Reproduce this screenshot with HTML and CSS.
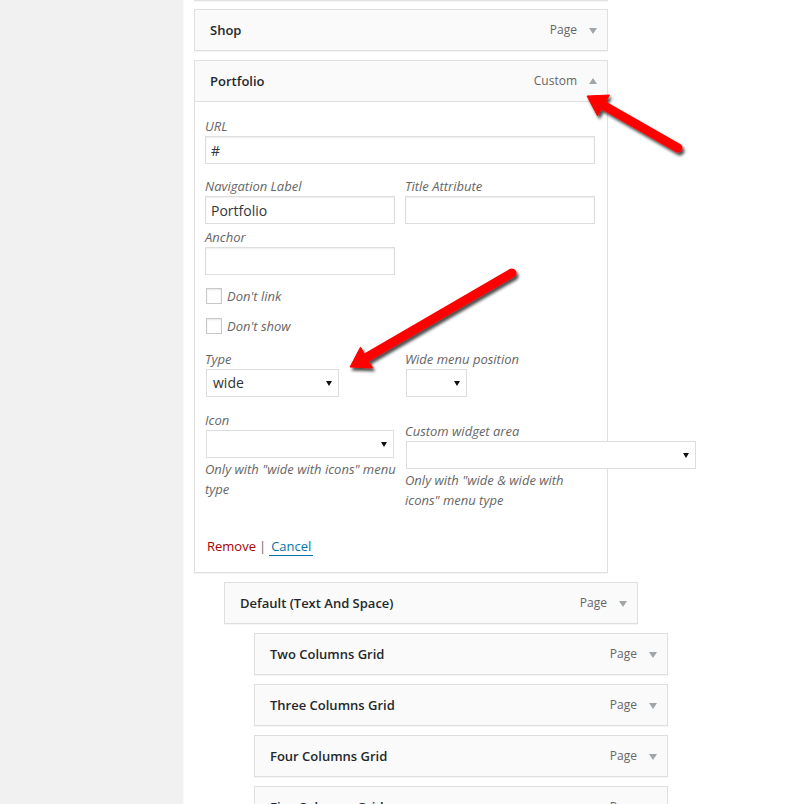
FILE: index.html
```html
<!DOCTYPE html>
<html lang="en">
<head>
<meta charset="utf-8">
<title>Menu editor</title>
<link rel="stylesheet" href="styles.css">
</head>
<body>
<div class="page">
  <aside class="sidebar"></aside>
  <main class="content">
    <ul class="menu">
      <li class="item item-tail"></li>
      <li class="item">
        <div class="handle"><span class="title">Shop</span><span class="type">Page</span><span class="toggle down"></span></div>
      </li>
      <li class="item open">
        <div class="handle"><span class="title">Portfolio</span><span class="type">Custom</span><span class="toggle up"></span></div>
        <div class="settings">
          <div class="field">
            <label class="lbl">URL</label>
            <input class="text wide" type="text" value="#">
          </div>
          <div class="cols row-nav">
            <div class="col">
              <label class="lbl">Navigation Label</label>
              <input class="text" type="text" value="Portfolio">
            </div>
            <div class="col">
              <label class="lbl">Title Attribute</label>
              <input class="text" type="text" value="">
            </div>
          </div>
          <div class="cols row-anchor">
            <div class="col">
              <label class="lbl">Anchor</label>
              <input class="text" type="text" value="">
            </div>
          </div>
          <label class="check first"><input type="checkbox"><span class="lbl-inline">Don't link</span></label>
          <label class="check second"><input type="checkbox"><span class="lbl-inline">Don't show</span></label>
          <div class="cols row-type">
            <div class="col">
              <span class="lbl">Type</span>
              <div class="select w-type"><span class="sel-text">wide</span><span class="sel-arrow"></span></div>
            </div>
            <div class="col">
              <span class="lbl">Wide menu position</span>
              <div class="select w-pos"><span class="sel-text"></span><span class="sel-arrow"></span></div>
            </div>
          </div>
          <div class="cols row-icon">
            <div class="col">
              <span class="lbl">Icon</span>
              <div class="select w-icon"><span class="sel-text"></span><span class="sel-arrow"></span></div>
              <p class="help help-left">Only with "wide with icons" menu type</p>
            </div>
            <div class="col col-offset">
              <span class="lbl">Custom widget area</span>
              <div class="select w-widget"><span class="sel-text"></span><span class="sel-arrow"></span></div>
              <p class="help">Only with "wide &amp; wide with icons" menu type</p>
            </div>
          </div>
          <div class="actions">
            <a class="remove" href="#">Remove</a><span class="sep">|</span><a class="cancel" href="#">Cancel</a>
          </div>
        </div>
      </li>
      <li class="item depth-1">
        <div class="handle"><span class="title">Default (Text And Space)</span><span class="type">Page</span><span class="toggle down"></span></div>
      </li>
      <li class="item depth-2">
        <div class="handle"><span class="title">Two Columns Grid</span><span class="type">Page</span><span class="toggle down"></span></div>
      </li>
      <li class="item depth-2">
        <div class="handle"><span class="title">Three Columns Grid</span><span class="type">Page</span><span class="toggle down"></span></div>
      </li>
      <li class="item depth-2">
        <div class="handle"><span class="title">Four Columns Grid</span><span class="type">Page</span><span class="toggle down"></span></div>
      </li>
      <li class="item depth-2">
        <div class="handle"><span class="title">Five Columns Grid</span><span class="type">Page</span><span class="toggle down"></span></div>
      </li>
    </ul>
  </main>
</div>
<svg class="arrows" width="812" height="804" viewBox="0 0 812 804" aria-hidden="true">
  <defs>
    <filter id="shadow" x="-20%" y="-20%" width="140%" height="140%">
      <feDropShadow dx="2" dy="3" stdDeviation="1.6" flood-color="#000" flood-opacity="0.7"/>
    </filter>
  </defs>
  <g filter="url(#shadow)" fill="#ff0000" stroke="#ff0000">
    <line x1="678" y1="148" x2="603.5" y2="105.4" stroke-width="9" stroke-linecap="round"/>
    <polygon points="587,96 609.5,95 597.5,115.8" stroke-width="1" stroke-linejoin="round"/>
    <line x1="512" y1="273" x2="366.5" y2="357.5" stroke-width="9" stroke-linecap="round"/>
    <polygon points="350,367 372.5,367.9 360.5,347.1" stroke-width="1" stroke-linejoin="round"/>
  </g>
</svg>
</body>
</html>
```

FILE: styles.css
```css
* { box-sizing: border-box; }

html, body {
  margin: 0;
  padding: 0;
  height: 804px;
  overflow: hidden;
  background: #fff;
  font-family: "Open Sans", "Liberation Sans", sans-serif;
  color: #444;
}

body { position: relative; }

.page {
  display: flex;
  min-height: 804px;
}

.sidebar {
  flex: none;
  width: 184px;
  background: #f1f1f1;
  border-right: 1px solid #f9f9f9;
}

.content {
  flex: 1;
  padding-left: 10px;
}

.menu {
  list-style: none;
  margin: 0;
  padding: 0;
}

.item {
  width: 414px;
  margin-top: 9px;
}

.item-tail {
  margin-top: 0;
  height: 1px;
  border-bottom: 1px solid #e2e2e2;
  box-shadow: 0 1px 1px rgba(0, 0, 0, 0.04);
}

.item-tail + .item { margin-top: 8px; }

.depth-1 { margin-left: 30px; }
.depth-2 { margin-left: 60px; }

.handle {
  display: flex;
  align-items: center;
  height: 42px;
  padding: 0 10px 0 15px;
  border: 1px solid #dfdfdf;
  background: #fafafa;
  box-shadow: 0 1px 1px rgba(0, 0, 0, 0.04);
}

.title {
  flex: 1;
  font-size: 13px;
  font-weight: 600;
  line-height: 20px;
  color: #23282d;
}

.type {
  font-size: 12px;
  line-height: 20px;
  color: #666;
  margin-right: 12px;
}

.toggle {
  width: 0;
  height: 0;
  border-left: 4px solid transparent;
  border-right: 4px solid transparent;
}

.toggle.down { border-top: 6px solid #a0a5aa; margin-top: 1px; }
.toggle.up { border-bottom: 6px solid #a0a5aa; margin-top: -1px; }

.settings {
  border: 1px solid #dfdfdf;
  border-top: none;
  padding: 15px 12px 16px 10px;
  background: #fff;
  box-shadow: 0 1px 1px rgba(0, 0, 0, 0.04);
}

.lbl, .lbl-inline {
  font-size: 13px;
  font-style: italic;
  color: #666;
  line-height: 19px;
}

.lbl { display: block; }

.text {
  display: block;
  width: 190px;
  height: 28px;
  margin: 0;
  padding: 0 5px;
  border: 1px solid #ddd;
  box-shadow: inset 0 1px 2px rgba(0, 0, 0, 0.07);
  background: #fff;
  font-family: inherit;
  font-size: 14px;
  color: #32373c;
  outline: none;
}

.text.wide { width: 390px; }

.cols {
  display: flex;
  gap: 10px;
}

.col { width: 190px; }

.row-nav { margin-top: 13px; }
.row-anchor { margin-top: 4px; }

.check {
  display: flex;
  align-items: center;
  gap: 5px;
  height: 16px;
  padding-left: 1px;
}

.check.first { margin-top: 13px; }
.check.second { margin-top: 14px; }

.check input {
  appearance: none;
  -webkit-appearance: none;
  width: 16px;
  height: 16px;
  margin: 0;
  border: 1px solid #c8c8c8;
  background: #fff;
  box-shadow: inset 0 1px 2px rgba(0, 0, 0, 0.1);
}

.row-type { margin-top: 16px; }
.row-type .lbl { line-height: 18px; margin-bottom: 1px; }
.row-icon { margin-top: 14px; }
.col-offset { padding-top: 11px; }

.select {
  display: flex;
  align-items: center;
  height: 28px;
  margin-left: 1px;
  padding: 0 6px 0 6px;
  border: 1px solid #ddd;
  background: #fff;
  font-size: 14px;
  color: #333;
}

.sel-text { flex: 1; line-height: 20px; }

.sel-arrow {
  width: 0;
  height: 0;
  border-left: 3px solid transparent;
  border-right: 3px solid transparent;
  border-top: 5px solid #111;
}

.w-type { width: 133px; }
.w-pos { width: 61px; }
.w-icon { width: 188px; }
.w-widget { width: 290px; }

.help {
  margin: 1px 0 0;
  font-size: 13px;
  font-style: italic;
  line-height: 20px;
  color: #666;
}

.help-left { width: 198px; }

.actions {
  display: flex;
  align-items: center;
  margin-top: 26px;
  padding-left: 2px;
  font-size: 13px;
  line-height: 20px;
}

.remove {
  color: #a00;
  text-decoration: none;
}

.sep {
  color: #666;
  margin: 0 3px 0 3px;
}

.cancel {
  color: #0073aa;
  text-decoration: none;
  padding: 0 2px;
  border-bottom: 1px solid #0073aa;
  line-height: 17px;
  margin-top: 2px;
}

.arrows {
  position: absolute;
  top: 0;
  left: 0;
  pointer-events: none;
}
```
